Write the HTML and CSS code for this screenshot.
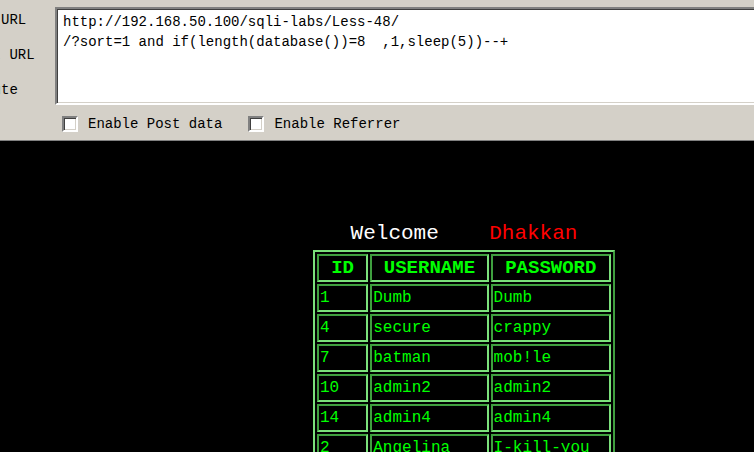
FILE: index.html
```html
<!doctype html>
<html>
<head>
	<meta charset="utf-8">
	<title>Less-48</title>
	<link rel="stylesheet" href="styles.css">
</head>
<body>
	<div id="hackbar">
		<div class="actions">
			<div class="action">Load URL</div>
			<div class="action">Split URL</div>
			<div class="action">Execute</div>
		</div>
		<div class="editor">
			<textarea id="url" spellcheck="false">http://192.168.50.100/sqli-labs/Less-48/
/?sort=1 and if(length(database())=8  ,1,sleep(5))--+</textarea>
			<div class="options">
				<label class="opt"><span class="box"></span>Enable Post data</label>
				<label class="opt"><span class="box"></span>Enable Referrer</label>
			</div>
		</div>
	</div>

	<div id="page">
		<div class="board">
			<div class="welcome">Welcome&nbsp;&nbsp;&nbsp;&nbsp;<span class="name">Dhakkan</span></div>
			<table id="users">
				<tr><th class="c-id">ID</th><th class="c-user">USERNAME</th><th class="c-pass">PASSWORD</th></tr>
				<tr><td>1</td><td>Dumb</td><td>Dumb</td></tr>
				<tr><td>4</td><td>secure</td><td>crappy</td></tr>
				<tr><td>7</td><td>batman</td><td>mob!le</td></tr>
				<tr><td>10</td><td>admin2</td><td>admin2</td></tr>
				<tr><td>14</td><td>admin4</td><td>admin4</td></tr>
				<tr><td>2</td><td>Angelina</td><td>I-kill-you</td></tr>
			</table>
		</div>
	</div>
</body>
</html>
```
FILE: styles.css
```css
*{margin: 0; padding: 0; box-sizing: border-box;}
html, body{height: 100%;}
body{background: #000; overflow: hidden; font-family: "Liberation Mono", "DejaVu Sans Mono", monospace;}

/* hackbar strip */
#hackbar {display: flex; height: 141px; background: #d4d0c8; border-bottom: 1px solid #808080;}
.actions {width: 55px; overflow: hidden; padding-top: 3px;}
.action {margin-left: -41px; width: 96px; height: 35px; line-height: 35px; font-size: 14px; color: #000; white-space: nowrap;}
.editor {flex: 1; min-width: 0;}
#url {display: block; width: calc(100% + 10px); height: 98px; margin-top: 7px; padding: 3px 6px; resize: none; overflow: hidden;
	font-family: "Liberation Mono", monospace; font-size: 14px; line-height: 20px; color: #000; background: #fff; outline: none;
	border: 2px solid; border-color: #808080 #fff #fff #808080; box-shadow: inset 1px 1px 0 #404040, inset -1px -1px 0 #d4d0c8;}
.options {display: flex; align-items: center; height: 16px; margin-top: 11px; padding-left: 7px; font-size: 14px; color: #000;}
.opt {display: flex; align-items: center; margin-right: 26px; white-space: nowrap;}
.box {width: 16px; height: 16px; margin-right: 10px; background: #fff; border: 2px solid; border-color: #808080 #fff #fff #808080; box-shadow: inset 1px 1px 0 #404040, inset -1px -1px 0 #d4d0c8;}

/* result page */
#page {padding: 81px 0 0 313px;}
.board {width: 302px;}
.welcome {height: 24px; line-height: 24px; margin-bottom: 4px; text-align: center; font-size: 21px; color: #fff; white-space: nowrap;}
.welcome .name {color: #ff0000;}
#users {width: 302px; border-collapse: separate; border-spacing: 2px; border: 2px solid; border-color: #7be07b #3f9f3f #3f9f3f #7be07b; color: #00ff00;}
#users th, #users td {height: 28px; padding: 0 1px; border: 2px solid; border-color: #3f9f3f #7be07b #7be07b #3f9f3f; vertical-align: middle; white-space: nowrap;}
#users th {font-size: 19px; font-weight: bold; text-align: center;}
#users td {font-size: 16px; text-align: left;}
.c-id {width: 52px;}
.c-user {width: 119px;}
.c-pass {width: 121px;}
```
